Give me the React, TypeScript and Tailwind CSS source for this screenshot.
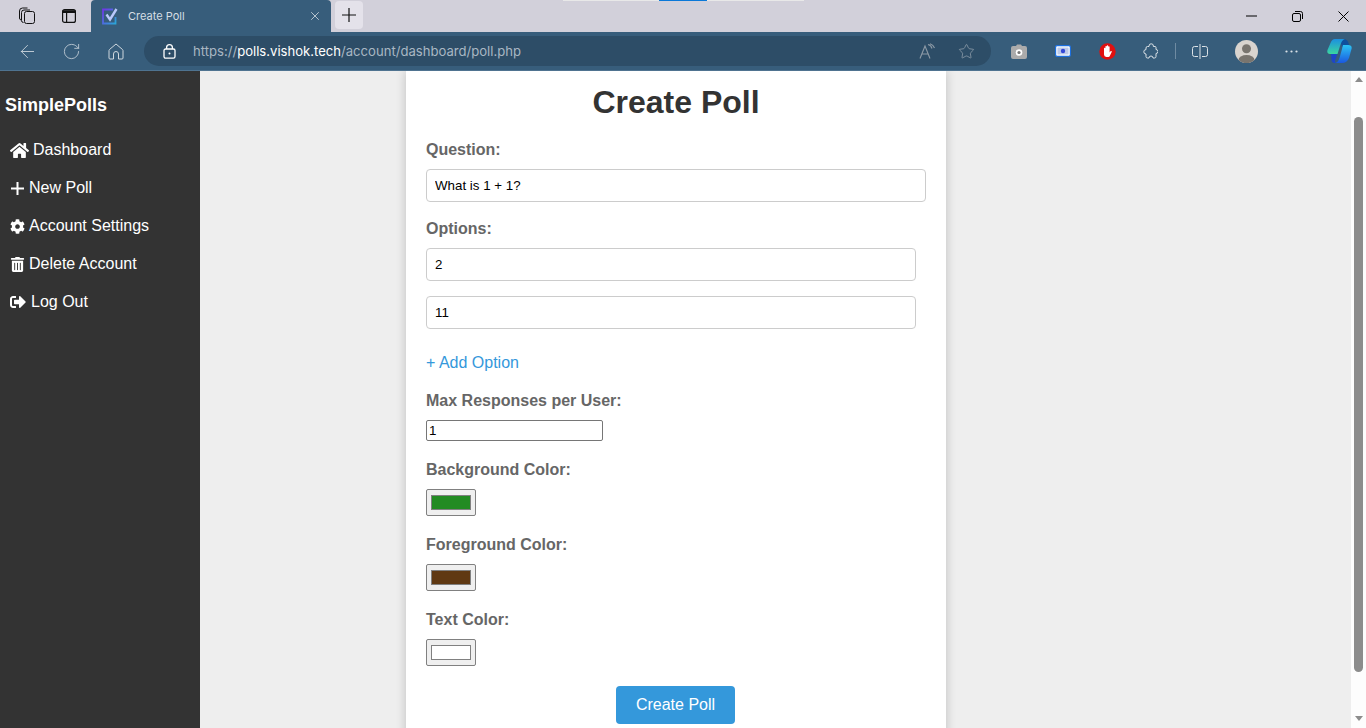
import React from 'react';
import { ArrowLeft, RotateCw, Star, X } from 'lucide-react';
import { FaHome, FaCog, FaTrashAlt, FaSignOutAlt } from 'react-icons/fa';

const FONT = "font-['Liberation_Sans',Arial,sans-serif]";

function TabsIcon() {
  return (
    <svg width="18" height="18" viewBox="0 0 18 18" fill="none" stroke="#111" strokeWidth="1">
      <rect x="6.5" y="4.5" width="10" height="12" rx="2" />
      <path d="M5.5 15.5 a2 2 0 0 1 -2 -2 V5.5 a2.5 2.5 0 0 1 2.5 -2.5 h6" />
      <path d="M3 13 a2 2 0 0 1 -1.5 -2 V4 a3 3 0 0 1 3 -3 h5" />
    </svg>
  );
}

function VerticalTabsIcon() {
  return (
    <svg width="16" height="16" viewBox="0 0 16 16" fill="none" stroke="#111" strokeWidth="1.2">
      <rect x="1.6" y="1.6" width="12.8" height="12.8" rx="2" />
      <path d="M1.6 3.6 H14.4" strokeWidth="2.8" />
      <path d="M5.6 4 V14" />
    </svg>
  );
}

function PollFavicon() {
  return (
    <svg width="16" height="17" viewBox="0 0 16 17" fill="none">
      <defs>
        <linearGradient id="fav" x1="0" y1="0" x2="1" y2="1">
          <stop offset="0" stopColor="#6f35e8" />
          <stop offset="1" stopColor="#2aa6d6" />
        </linearGradient>
      </defs>
      <path d="M13.5 9 V15.5 H1 V1.5 H11" stroke="url(#fav)" strokeWidth="1.8" />
      <path d="M4.5 6.5 L8 11.5 L14.5 1" stroke="#b9c8fb" strokeWidth="2.4" />
    </svg>
  );
}

function HomeIcon() {
  return (
    <svg width="16" height="17" viewBox="0 0 16 17" fill="none" stroke="#cfd8df" strokeWidth="1">
      <path d="M8 1 L14.5 6.5 a1.2 1.2 0 0 1 .5 1 V15 a1 1 0 0 1 -1 1 H10.5 V11 a2.5 2.5 0 0 0 -5 0 V16 H2 a1 1 0 0 1 -1 -1 V7.5 a1.2 1.2 0 0 1 .5 -1 Z" />
    </svg>
  );
}

function LockIcon() {
  return (
    <svg width="13" height="15" viewBox="0 0 13 15" fill="none" stroke="#fff" strokeWidth="1.3">
      <rect x="1" y="5" width="11" height="9.2" rx="1.6" />
      <path d="M3.6 5 V3.6 a2.9 2.9 0 0 1 5.8 0 V5" />
      <circle cx="6.5" cy="9.6" r="1" fill="#fff" stroke="none" />
    </svg>
  );
}

function ReadAloudIcon() {
  return (
    <svg width="17" height="17" viewBox="0 0 17 17" fill="none" stroke="#8d9aa6" strokeWidth="1.1">
      <path d="M1 15.5 L6 3 L11 15.5 M2.8 11 H9.2" />
      <path d="M9 1.5 A5.5 5.5 0 0 1 13 5.5 M11 .8 A7 7 0 0 1 15.5 5" />
    </svg>
  );
}

function CameraIcon() {
  return (
    <svg width="16" height="15" viewBox="0 0 16 15">
      <path d="M5 2 L6 .5 H10 L11 2 H14 a2 2 0 0 1 2 2 V13 a2 2 0 0 1 -2 2 H2 a2 2 0 0 1 -2 -2 V4 a2 2 0 0 1 2 -2 Z" fill="#ababab" />
      <circle cx="8" cy="8.5" r="3.3" fill="#fff" />
      <circle cx="8" cy="8.5" r="1.6" fill="#777" />
    </svg>
  );
}

function ScreenIcon() {
  return (
    <svg width="16" height="12" viewBox="0 0 16 12">
      <rect x=".6" y=".6" width="14.8" height="10.8" rx="1.6" fill="#fff" stroke="#1b6fe0" strokeWidth="1.2" />
      <rect x="2.4" y="2.4" width="11.2" height="7.2" rx=".6" fill="#bcc9e8" />
      <circle cx="8" cy="6" r="2.2" fill="#3348d6" />
    </svg>
  );
}

function BlockerIcon() {
  return (
    <svg width="17" height="17" viewBox="0 0 17 17">
      <circle cx="8.5" cy="8.5" r="8.2" fill="#e01010" />
      <path
        d="M5 8.5 V5.5 a.7 .7 0 0 1 1.4 0 V8 V3.6 a.7 .7 0 0 1 1.4 0 V8 V3 a.7 .7 0 0 1 1.4 0 V8 V4 a.7 .7 0 0 1 1.4 0 V9.5 l.9 -1.3 a.7 .7 0 0 1 1.2 .7 L10.8 13 a1.8 1.8 0 0 1 -1.4 1 H7.4 a2.4 2.4 0 0 1 -2.4 -2.4 Z"
        fill="#fff"
      />
    </svg>
  );
}

function ExtensionIcon() {
  return (
    <svg width="15" height="16" viewBox="0 0 15 16" fill="none" stroke="#dbe2e7" strokeWidth="1">
      <path d="M4.5 3.5 H6 a2 2 0 0 1 0 -.5 a2.2 2.2 0 0 1 4.4 0 V3.5 H12 a1 1 0 0 1 1 1 V6.5 a2 2 0 0 1 0 4 V13.5 a1.5 1.5 0 0 1 -1.5 1.5 H10 a2 2 0 0 0 -4 0 H4.5 a1.5 1.5 0 0 1 -1.5 -1.5 V11 a2.2 2.2 0 0 1 0 -4.4 V5 a1.5 1.5 0 0 1 1.5 -1.5 Z" />
    </svg>
  );
}

function SplitIcon() {
  return (
    <svg width="16" height="15" viewBox="0 0 16 15" fill="none" stroke="#dbe2e7" strokeWidth="1">
      <path d="M6 2.5 H2.5 a2 2 0 0 0 -2 2 V10.5 a2 2 0 0 0 2 2 H6" />
      <path d="M10 2.5 H13.5 a2 2 0 0 1 2 2 V10.5 a2 2 0 0 1 -2 2 H10" />
      <path d="M8 0 V15" />
    </svg>
  );
}

function ProfileIcon() {
  return (
    <svg width="23" height="23" viewBox="0 0 23 23">
      <defs>
        <clipPath id="pc">
          <circle cx="11.5" cy="11.5" r="11.5" />
        </clipPath>
      </defs>
      <circle cx="11.5" cy="11.5" r="11.5" fill="#d9d4cf" />
      <g clipPath="url(#pc)" fill="#79756f">
        <circle cx="11.5" cy="8.7" r="4.5" />
        <ellipse cx="11.5" cy="20" rx="8" ry="5" />
      </g>
    </svg>
  );
}

function DotsIcon() {
  return (
    <svg width="13" height="3" viewBox="0 0 13 3" fill="#dbe2e7">
      <circle cx="1.5" cy="1.5" r="1.1" />
      <circle cx="6.5" cy="1.5" r="1.1" />
      <circle cx="11.5" cy="1.5" r="1.1" />
    </svg>
  );
}

function CopilotIcon() {
  return (
    <svg width="25" height="24" viewBox="0 0 25 24">
      <defs>
        <linearGradient id="c1" x1="0" y1="0" x2="0" y2="1">
          <stop offset="0" stopColor="#1c8fe0" />
          <stop offset="1" stopColor="#3bd6a0" />
        </linearGradient>
        <linearGradient id="c2" x1="0" y1="0" x2="0" y2="1">
          <stop offset="0" stopColor="#2cc4f4" />
          <stop offset="1" stopColor="#1a58e0" />
        </linearGradient>
      </defs>
      <path d="M13 0 H17 Q20.5 .5 21.5 4 L22.5 8 H15 Z" fill="#0f4f9c" />
      <path d="M4 14 L10.5 14 L8 22 Q7.5 23.5 9 24 H7 Q4.5 23.5 4.5 20 Z" fill="#1d46c8" />
      <path d="M8 0 H18 Q14.5 1 13 7 L10.5 15 H3 Q-.5 15 .5 11 L3.5 4 Q5 0 8 0 Z" fill="url(#c1)" />
      <path d="M16 6 H21 Q25.5 6 24.5 10 L22 19 Q20 24 15 24 H7.5 Q11 24 12.5 19 L15 10 Q15.5 7.5 16 6 Z" fill="url(#c2)" />
    </svg>
  );
}

function SideItem({ icon, label, gap }: { icon: React.ReactNode; label: string; gap: string }) {
  return (
    <a className={`flex h-[38px] items-center pl-[10px] text-base text-white ${gap}`}>
      {icon}
      <span>{label}</span>
    </a>
  );
}

function SidePlus() {
  return (
    <svg width="15" height="15" viewBox="0 0 15 15" stroke="#fff" strokeWidth="2">
      <path d="M7.5 1 V14 M1 7.5 H14" />
    </svg>
  );
}

function Label({ children }: { children: React.ReactNode }) {
  return <label className="block h-[18px] text-base leading-[18px] font-bold text-[#666]">{children}</label>;
}

function ColorField({ label, color }: { label: string; color: string }) {
  return (
    <div className="mt-[20px]">
      <Label>{label}</Label>
      <div className="mt-[10px] flex h-[27px] w-[50px] items-center justify-center rounded-[2px] border border-[#808080] bg-[#efefef]">
        <div className="h-[15px] w-[40px] border border-[#808080]" style={{ backgroundColor: color }} />
      </div>
    </div>
  );
}

function TextField({ value, width }: { value: string; width: string }) {
  return (
    <input
      readOnly
      value={value}
      className={`block h-[33px] ${width} rounded-[4px] border border-[#ccc] bg-white px-2 text-[13.33px] text-black outline-none`}
    />
  );
}

export default function App() {
  return (
    <div className={`flex h-[728px] w-[1366px] flex-col overflow-hidden bg-[#eee] ${FONT}`}>
      {/* Browser tab strip */}
      <div className="relative flex h-8 shrink-0 items-end bg-[#d2d0da]">
        <div className="flex h-8 w-[91px] items-center gap-[25px] pl-[18px]">
          <TabsIcon />
          <VerticalTabsIcon />
        </div>
        <div className="flex h-[32px] w-[240px] items-center rounded-t-[4px] bg-[#375d7b] pl-[11px] pr-[9px]">
          <PollFavicon />
          <span className="ml-[10px] flex-1 font-['Inter',sans-serif] text-[11px] text-[#d5dde4]">Create Poll</span>
          <X size={14} strokeWidth={1.3} color="#dfe5ea" />
        </div>
        <div className="mb-[2px] ml-[4px] flex h-7 w-7 items-center justify-center self-center rounded-[4px] bg-[#e4e2ea]">
          <svg width="16" height="16" viewBox="0 0 16 16" stroke="#111" strokeWidth="1.2">
            <path d="M8 1 V15 M1 8 H15" />
          </svg>
        </div>
        <div className="absolute top-0 left-[563px] flex h-px">
          <div className="h-px w-[96px] bg-[#e8e8e8]" />
          <div className="h-px w-[48px] bg-[#0a78d8]" />
          <div className="h-px w-[97px] bg-[#e8e8e8]" />
        </div>
        <div className="ml-auto flex h-8 items-center">
          <div className="flex w-[46px] justify-center">
            <svg width="11" height="2" viewBox="0 0 11 2" stroke="#000" strokeWidth="1">
              <path d="M0 1 H11" />
            </svg>
          </div>
          <div className="flex w-[46px] justify-center">
            <svg width="11" height="11" viewBox="0 0 11 11" fill="none" stroke="#000" strokeWidth="1">
              <rect x=".5" y="2.5" width="8" height="8" rx="1.5" />
              <path d="M3 .5 H8.5 a2 2 0 0 1 2 2 V8" />
            </svg>
          </div>
          <div className="flex w-[46px] justify-center">
            <svg width="11" height="11" viewBox="0 0 11 11" stroke="#000" strokeWidth="1">
              <path d="M.5 .5 L10.5 10.5 M10.5 .5 L.5 10.5" />
            </svg>
          </div>
        </div>
      </div>

      {/* Address bar */}
      <div className="flex h-[38px] shrink-0 items-center bg-[#375d7b]">
        <div className="flex w-[144px] items-center pl-[17px] text-[#cfd8df]">
          <ArrowLeft size={21} strokeWidth={1} />
          <RotateCw size={19} strokeWidth={1} className="ml-[24px]" />
          <div className="ml-[27px] flex">
            <HomeIcon />
          </div>
        </div>
        <div className="flex h-[30px] w-[847px] items-center rounded-full bg-[#2d4d67] pl-[19px] pr-[16px]">
          <LockIcon />
          <div className="ml-[17px] flex-1 pt-px font-['Inter',sans-serif] text-[13.1px] text-[#a9b7c3]">
            https://<span className="text-white">polls.vishok.tech</span>/account/dashboard/poll.php
          </div>
          <ReadAloudIcon />
          <Star size={17} strokeWidth={1} color="#9aa7b2" className="ml-[22px]" />
        </div>
        <div className="flex flex-1 items-center">
          <div className="ml-[20px] flex">
            <CameraIcon />
          </div>
          <div className="ml-[28px] flex">
            <ScreenIcon />
          </div>
          <div className="ml-[28px] flex">
            <BlockerIcon />
          </div>
          <div className="ml-[27px] flex">
            <ExtensionIcon />
          </div>
          <div className="ml-[17px] h-[16px] w-px bg-[#6f8ba2]" />
          <div className="ml-[16px] flex">
            <SplitIcon />
          </div>
          <div className="ml-[27px] flex">
            <ProfileIcon />
          </div>
          <div className="ml-[27px] flex">
            <DotsIcon />
          </div>
          <div className="ml-[29px] flex">
            <CopilotIcon />
          </div>
        </div>
      </div>

      {/* Page */}
      <div className="flex min-h-0 flex-1 border-t border-[#4f7390]">
        <aside className="w-[200px] shrink-0 bg-[#333] pt-[24px]">
          <h2 className="pl-[5px] text-[18px] leading-[21px] font-bold text-white">SimplePolls</h2>
          <nav className="mt-[15px]">
            <SideItem icon={<FaHome size={19} color="#fff" />} label="Dashboard" gap="gap-[4px]" />
            <SideItem icon={<SidePlus />} label="New Poll" gap="gap-[4px]" />
            <SideItem icon={<FaCog size={15} color="#fff" />} label="Account Settings" gap="gap-[4px]" />
            <SideItem icon={<FaTrashAlt size={15} color="#fff" />} label="Delete Account" gap="gap-[4px]" />
            <SideItem icon={<FaSignOutAlt size={16} color="#fff" />} label="Log Out" gap="gap-[5px]" />
          </nav>
        </aside>

        <main className="min-w-0 flex-1 overflow-hidden pl-[206px]">
          <div className="h-[700px] w-[540px] bg-white px-[20px] pt-[13px] shadow-[0_0_10px_rgba(0,0,0,0.2)]">
            <h1 className="text-center text-[32px] leading-[37px] font-bold text-[#333]">Create Poll</h1>
            <div className="mt-[20px]">
              <Label>Question:</Label>
            </div>
            <div className="mt-[10px]">
              <TextField value="What is 1 + 1?" width="w-[500px]" />
            </div>
            <div className="mt-[18px]">
              <Label>Options:</Label>
            </div>
            <div className="mt-[10px]">
              <TextField value="2" width="w-[490px]" />
            </div>
            <div className="mt-[15px]">
              <TextField value="11" width="w-[490px]" />
            </div>
            <div className="mt-[25px] h-[18px] text-base leading-[18px] text-[#3498db]">+ Add Option</div>
            <div className="mt-[20px]">
              <Label>Max Responses per User:</Label>
            </div>
            <input
              readOnly
              value="1"
              className="mt-[10px] block h-[21px] w-[177px] rounded-[2px] border border-[#767676] bg-white px-[2px] text-[13.33px] text-black outline-none"
            />
            <ColorField label="Background Color:" color="#228b22" />
            <ColorField label="Foreground Color:" color="#603913" />
            <ColorField label="Text Color:" color="#ffffff" />
            <div className="mt-[20px] flex justify-center pr-[1px]">
              <button className="h-[38px] w-[119px] rounded-[4px] bg-[#3498db] text-base text-white">Create Poll</button>
            </div>
          </div>
        </main>

        {/* Scrollbar */}
        <div className="flex w-[15px] shrink-0 flex-col items-center bg-[#fdfdfd] pt-[6px] pb-[7px]">
          <div className="h-0 w-0 border-x-[4.5px] border-b-[5px] border-x-transparent border-b-[#8c8c8c]" />
          <div className="mt-[35px] h-[555px] w-[9px] rounded-full bg-[#8c8c8c]" />
          <div className="mt-auto h-0 w-0 border-x-[4.5px] border-t-[5px] border-x-transparent border-t-[#8c8c8c]" />
        </div>
      </div>
    </div>
  );
}
